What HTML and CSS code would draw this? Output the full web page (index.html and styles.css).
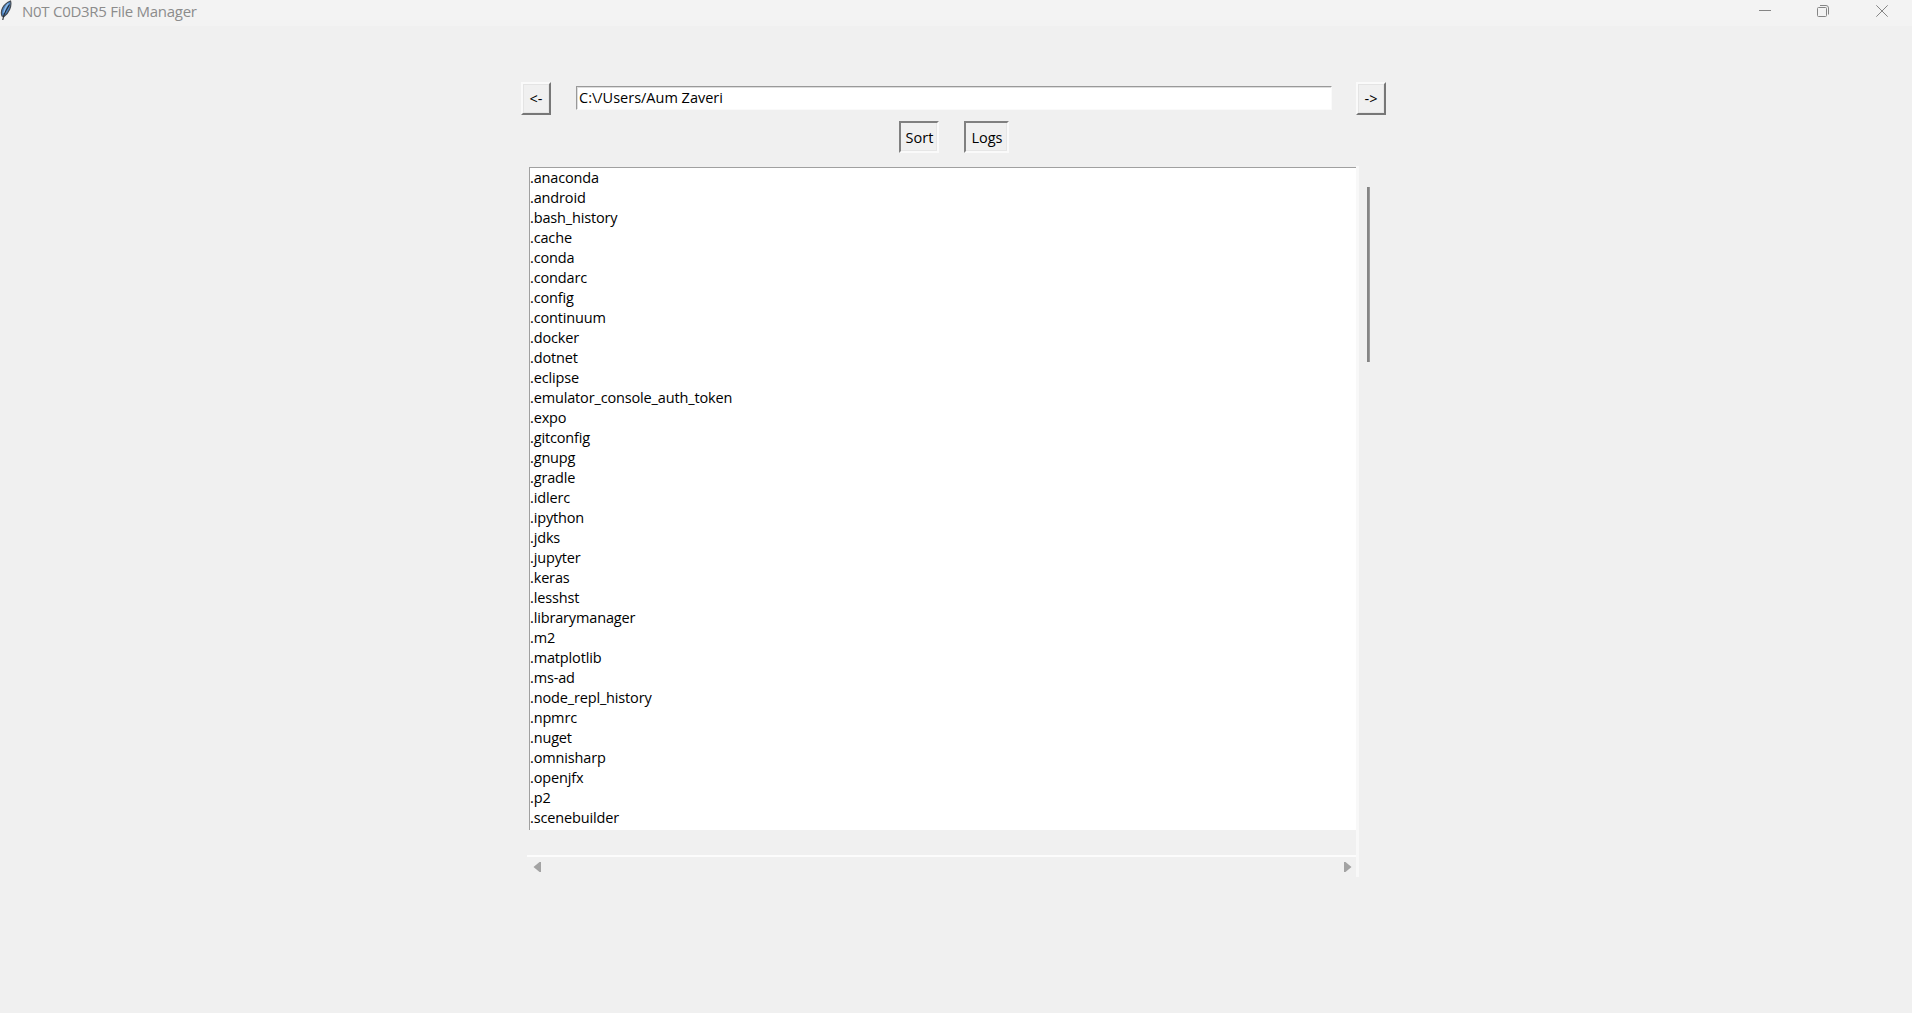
FILE: index.html
```html
<!DOCTYPE html>
<html lang="en">
<head>
<meta charset="utf-8">
<title>N0T C0D3R5 File Manager</title>
<link rel="stylesheet" href="styles.css">
</head>
<body>
<header class="titlebar">
  <svg class="feather" width="12" height="21" viewBox="0 0 12 21">
    <path d="M2 16C0 11 3 4 10.5 1C12 6 9 13 4 16.500Z" fill="#4b83c4" stroke="#454b52" stroke-width="1.200"/>
    <path d="M4 13C4.500 9 6 6 8.500 3.500" fill="none" stroke="#8dbbea" stroke-width="1.500"/>
    <path d="M9.500 4.500C7 9 3.500 13 2.800 20" fill="none" stroke="#252a30" stroke-width="1.100"/>
  </svg>
  <h1 class="title">N0T C0D3R5 File Manager</h1>
  <div class="controls">
    <svg width="12" height="12" viewBox="0 0 12 12"><path d="M0 5.500H12"/></svg>
    <svg width="12" height="12" viewBox="0 0 12 12"><rect x=".5" y="2.500" width="9" height="9" rx="1"/><path d="M3 .5H9A2.500 2.500 0 0 1 11.500 3V9.500"/></svg>
    <svg width="12" height="12" viewBox="0 0 12 12"><path d="M.3 .3L11.700 11.700M11.700 .3L.3 11.700"/></svg>
  </div>
</header>
<main class="window">
  <div class="navigation">
    <button class="nav-button">&lt;-</button>
    <div class="path"><span class="path-text">C:\/Users/Aum Zaveri</span></div>
    <button class="nav-button">-&gt;</button>
  </div>
  <div class="menus">
    <button class="menu sort">Sort</button>
    <button class="menu logs">Logs</button>
  </div>
  <div class="browser">
    <div class="pane">
      <ul class="files">
        <li>.anaconda</li><li>.android</li><li>.bash_history</li><li>.cache</li><li>.conda</li><li>.condarc</li><li>.config</li><li>.continuum</li><li>.docker</li><li>.dotnet</li><li>.eclipse</li><li>.emulator_console_auth_token</li><li>.expo</li><li>.gitconfig</li><li>.gnupg</li><li>.gradle</li><li>.idlerc</li><li>.ipython</li><li>.jdks</li><li>.jupyter</li><li>.keras</li><li>.lesshst</li><li>.librarymanager</li><li>.m2</li><li>.matplotlib</li><li>.ms-ad</li><li>.node_repl_history</li><li>.npmrc</li><li>.nuget</li><li>.omnisharp</li><li>.openjfx</li><li>.p2</li><li>.scenebuilder</li>
      </ul>
      <div class="hscroll">
        <svg width="9" height="12" viewBox="0 0 9 12"><path d="M8 1V11H6.500L.5 6L6.500 1Z"/></svg>
        <svg width="9" height="12" viewBox="0 0 9 12"><path d="M1 1V11H2.500L8.500 6L2.500 1Z"/></svg>
      </div>
    </div>
    <div class="vscroll"><div class="thumb"></div></div>
  </div>
</main>
</body>
</html>
```
FILE: styles.css
```css
* { box-sizing: border-box; }
body {
  margin: 0;
  height: 1013px;
  overflow: hidden;
  background: #f0f0f0;
  color: #000;
  font: 14.5px/20px "Open Sans", "Noto Sans", sans-serif;
}
.titlebar {
  display: flex;
  height: 26px;
  background: #f3f3f3;
}
.title {
  margin: 0 0 0 10px;
  font-size: 15px;
  line-height: 23px;
  font-weight: 400;
  letter-spacing: -0.27px;
  color: #8c8c8c;
  white-space: nowrap;
}
.controls {
  display: flex;
  gap: 46px;
  margin: 5px 24px 0 auto;
}
.controls svg { fill: none; stroke: #858585; stroke-width: 1; }
.controls svg:last-child { margin-left: 1px; }
.window { width: 866px; margin-left: 521px; padding-top: 56px; }
.navigation {
  display: flex;
  height: 33px;
}
.nav-button, .menu {
  padding: 0;
  background: #f0f0f0;
  color: inherit;
  font: inherit;
  white-space: nowrap;
}
.nav-button {
  width: 30px;
  height: 33px;
  border: 2px solid;
  border-color: #fafafa #777 #777 #fafafa;
  box-shadow: inset 1px 1px #e4e4e4, inset -1px -1px #e6e6e6;
}
.path {
  width: 756px;
  height: 24px;
  margin: 4px 24px 0 25px;
  padding-left: 2px;
  border: 1px solid;
  border-color: #999 #fafafa #fafafa #999;
  background: #fff;
  box-shadow: inset 1px 1px #ddd;
}
.path-text { display: block; line-height: 22px; }
.menus { display: flex; gap: 25px; padding: 6px 0 0 378px; }
.menu {
  height: 32px;
  padding: 2px 0 0 1px;
  border: 2px solid;
  border-color: #808080 #fafafa #fafafa #808080;
  box-shadow: inset -1px -1px #e6e6e6;
}
.sort { width: 40px; }
.logs { width: 45px; }
.browser { display: flex; margin: 13px 0 0 6px; }
.pane { width: 829px; padding-top: 1px; }
.files {
  height: 663px;
  margin: 0 0 0 2px;
  padding: 0;
  list-style: none;
  letter-spacing: -0.15px;
  background: #fff;
  border: solid #a0a0a0;
  border-width: 1px 0 0 1px;
}
.files li { height: 20px; }
.hscroll {
  display: flex;
  justify-content: space-between;
  margin-top: 25px;
  padding: 4px 4px 0 6px;
  border-top: 2px solid #fcfcfc;
}
.hscroll svg { fill: #a3a3a3; }
.vscroll {
  width: 30px;
  height: 711px;
  padding: 21px 0 0 8px;
  border-left: 3px solid #f8f8f8;
}
.thumb { width: 3px; height: 175px; background: #858585; border-right: 1px solid #9b9b9b; }
```
